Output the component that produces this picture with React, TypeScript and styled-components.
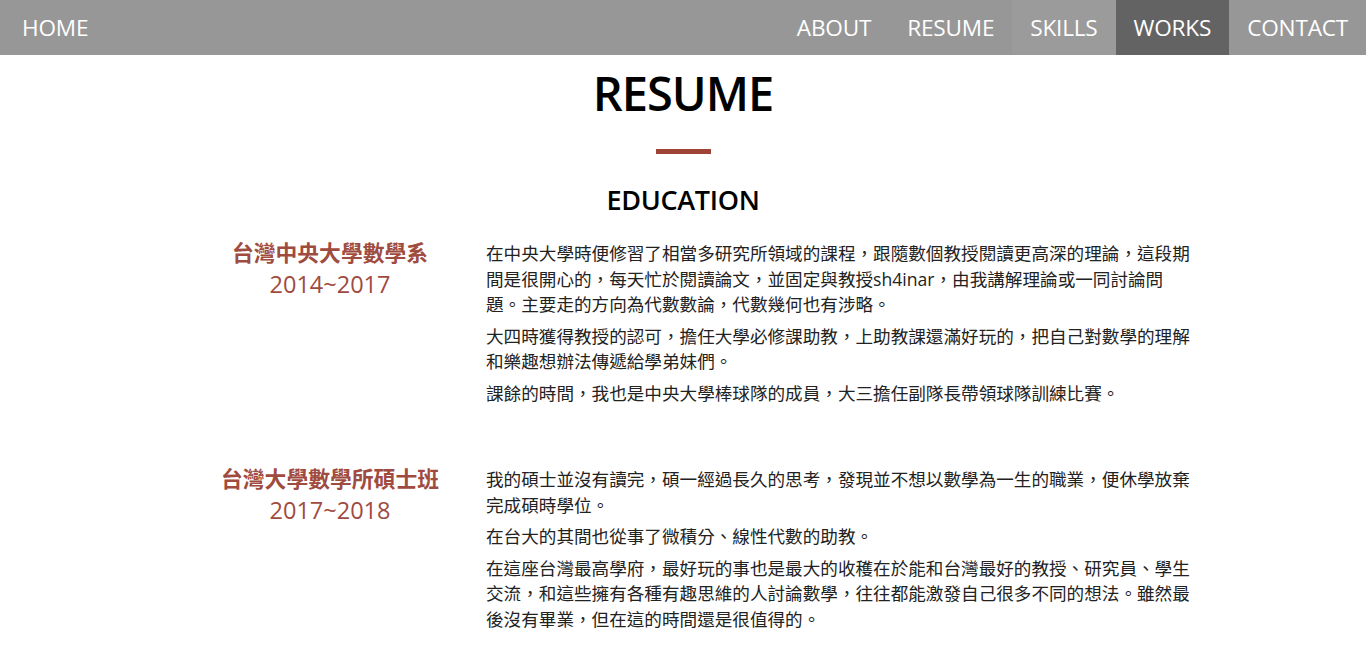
import React from "react";
import styled, { createGlobalStyle } from "styled-components";

const GlobalStyle = createGlobalStyle`
  html, body {
    margin: 0;
    padding: 0;
    background: #ffffff;
  }
  body {
    font-family: "Open Sans", "Noto Sans CJK TC", sans-serif;
    color: #222;
  }
  * { box-sizing: border-box; }
`;

const NavBar = styled.nav`
  display: flex;
  justify-content: space-between;
  align-items: stretch;
  height: 55px;
  background: #979797;
`;

const NavGroup = styled.div`
  display: flex;
  align-items: stretch;
`;

const NavLink = styled.a<{ $tone?: "active" | "hover" }>`
  display: flex;
  align-items: center;
  padding: 0 18px;
  font-size: 22.6px;
  color: #ffffff;
  text-decoration: none;
  letter-spacing: -0.2px;
  background: ${(p) =>
    p.$tone === "active" ? "#636363" : p.$tone === "hover" ? "#9b9b9b" : "transparent"};
`;

const HomeLink = styled(NavLink)`
  padding-left: 22px;
`;

const Main = styled.main`
  display: flex;
  flex-direction: column;
  align-items: center;
`;

const PageTitle = styled.h1`
  margin: 6px 0 0;
  font-size: 47px;
  line-height: 64px;
  font-weight: 600;
  color: #000;
  letter-spacing: -1px;
`;

const Rule = styled.div`
  width: 55px;
  height: 5px;
  margin-top: 24px;
  background: #9f4337;
`;

const SectionTitle = styled.h2`
  margin: 28px 0 0;
  font-size: 27px;
  line-height: 36px;
  font-weight: 600;
  color: #000;
  letter-spacing: -0.3px;
`;

const EntryList = styled.div`
  display: flex;
  flex-direction: column;
  gap: 54.5px;
  width: 1018px;
  margin-top: 17px;
`;

const Entry = styled.section`
  display: grid;
  grid-template-columns: 312px 706px;
`;

const EntryHead = styled.div`
  display: flex;
  flex-direction: column;
  align-items: center;
  color: #a04b40;
  line-height: 33px;
`;

const School = styled.div`
  font-size: 21.8px;
  font-weight: 700;
  font-family: "Noto Sans CJK TC", sans-serif;
`;

const Years = styled.div`
  font-size: 23.5px;
  font-weight: 400;
`;

const EntryBody = styled.div`
  padding-top: 6px;
`;

const Para = styled.p`
  margin: 0 0 6px;
  font-family: "Open Sans", "Noto Sans CJK TC", sans-serif;
  font-size: 17.6px;
  line-height: 25.6px;
  color: #222;
  &:last-child { margin-bottom: 0; }
`;

const education = [
  {
    school: "台灣中央大學數學系",
    years: "2014~2017",
    paras: [
      "在中央大學時便修習了相當多研究所領域的課程，跟隨數個教授閱讀更高深的理論，這段期間是很開心的，每天忙於閱讀論文，並固定與教授sh4inar，由我講解理論或一同討論問題。主要走的方向為代數數論，代數幾何也有涉略。",
      "大四時獲得教授的認可，擔任大學必修課助教，上助教課還滿好玩的，把自己對數學的理解和樂趣想辦法傳遞給學弟妹們。",
      "課餘的時間，我也是中央大學棒球隊的成員，大三擔任副隊長帶領球隊訓練比賽。",
    ],
  },
  {
    school: "台灣大學數學所碩士班",
    years: "2017~2018",
    paras: [
      "我的碩士並沒有讀完，碩一經過長久的思考，發現並不想以數學為一生的職業，便休學放棄完成碩時學位。",
      "在台大的其間也從事了微積分、線性代數的助教。",
      "在這座台灣最高學府，最好玩的事也是最大的收穫在於能和台灣最好的教授、研究員、學生交流，和這些擁有各種有趣思維的人討論數學，往往都能激發自己很多不同的想法。雖然最後沒有畢業，但在這的時間還是很值得的。",
    ],
  },
];

export default function App() {
  return (
    <>
      <GlobalStyle />
      <NavBar>
        <NavGroup>
          <HomeLink href="#">HOME</HomeLink>
        </NavGroup>
        <NavGroup>
          <NavLink href="#">ABOUT</NavLink>
          <NavLink href="#">RESUME</NavLink>
          <NavLink href="#" $tone="hover">SKILLS</NavLink>
          <NavLink href="#" $tone="active">WORKS</NavLink>
          <NavLink href="#">CONTACT</NavLink>
        </NavGroup>
      </NavBar>
      <Main>
        <PageTitle>RESUME</PageTitle>
        <Rule />
        <SectionTitle>EDUCATION</SectionTitle>
        <EntryList>
          {education.map((e) => (
            <Entry key={e.school}>
              <EntryHead>
                <School>{e.school}</School>
                <Years>{e.years}</Years>
              </EntryHead>
              <EntryBody>
                {e.paras.map((p, i) => (
                  <Para key={i}>{p}</Para>
                ))}
              </EntryBody>
            </Entry>
          ))}
        </EntryList>
      </Main>
    </>
  );
}
